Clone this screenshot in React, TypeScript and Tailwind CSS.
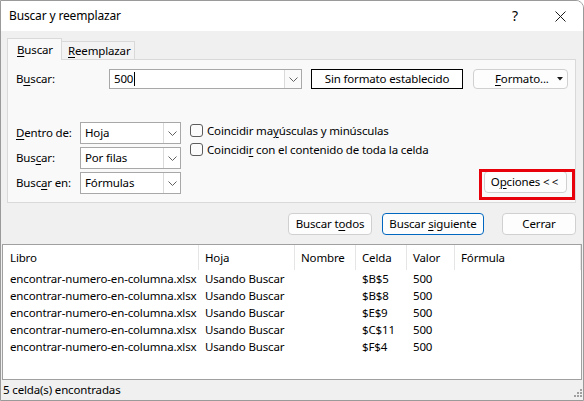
import React from 'react';

const rows = [
  { libro: 'encontrar-numero-en-columna.xlsx', hoja: 'Usando Buscar', celda: '$B$5', valor: '500' },
  { libro: 'encontrar-numero-en-columna.xlsx', hoja: 'Usando Buscar', celda: '$B$8', valor: '500' },
  { libro: 'encontrar-numero-en-columna.xlsx', hoja: 'Usando Buscar', celda: '$E$9', valor: '500' },
  { libro: 'encontrar-numero-en-columna.xlsx', hoja: 'Usando Buscar', celda: '$C$11', valor: '500' },
  { libro: 'encontrar-numero-en-columna.xlsx', hoja: 'Usando Buscar', celda: '$F$4', valor: '500' },
];

const cols = [
  { label: 'Libro', w: 'w-[195px]' },
  { label: 'Hoja', w: 'w-[96px]' },
  { label: 'Nombre', w: 'w-[61px]' },
  { label: 'Celda', w: 'w-[51px]' },
  { label: 'Valor', w: 'w-[48px]' },
  { label: 'Fórmula', w: 'w-[126px]' },
];

// access key letter
function K({ children }: { children: React.ReactNode }) {
  return <span className="underline decoration-1 underline-offset-[2px]">{children}</span>;
}

function Chevron() {
  return (
    <svg width="9" height="5" viewBox="0 0 9 5" fill="none" stroke="#606060" strokeWidth="1">
      <path d="M0.5 0.5l4 4 4-4" />
    </svg>
  );
}

function Select({ value }: { value: string }) {
  return (
    <div className="flex h-[22px] w-[101px] items-center border border-[#a8a8a8] bg-white">
      <span className="flex-1 pl-[4px]">{value}</span>
      <span className="flex h-full w-[17px] items-center justify-center border-l border-[#dadada]">
        <Chevron />
      </span>
    </div>
  );
}

function Check({ children }: { children: React.ReactNode }) {
  return (
    <div className="flex h-[19px] items-center">
      <span className="h-[13px] w-[13px] rounded-[3px] border border-[#5c5c5c] bg-[#fbfbfb]" />
      <span className="ml-[4px]">{children}</span>
    </div>
  );
}

function Btn({ children, w, focus }: { children: React.ReactNode; w: string; focus?: boolean }) {
  return (
    <div
      className={`flex h-[22px] ${w} items-center justify-center rounded-[4px] border bg-[#fdfdfd] ${
        focus ? 'border-[#0067c0]' : 'border-[#d0d0d0]'
      }`}
    >
      <span>{children}</span>
    </div>
  );
}

export default function App() {
  return (
    <div className="flex h-[401px] w-[584px] flex-col overflow-hidden whitespace-nowrap rounded-tr-[8px] border border-[#9a9a9a] bg-[#f0f0f0] font-['Segoe_UI','Noto_Sans',sans-serif] text-[11.5px] leading-none tracking-[-0.15px] text-black">
      {/* title bar */}
      <div className="flex h-[30px] shrink-0 items-center bg-white pl-[8px]">
        <span className="text-[12px]">Buscar y reemplazar</span>
        <span className="ml-auto mr-[37px] text-[14px]">?</span>
        <svg className="mr-[17px]" width="11" height="11" viewBox="0 0 11 11" stroke="#1a1a1a" strokeWidth="1">
          <path d="M0.5 0.5l10 10M10.5 0.5l-10 10" />
        </svg>
      </div>

      <div className="ml-[6px] w-[569px] pt-[7px]">
        {/* tabs */}
        <div className="flex h-[21px] items-end">
          <div className="relative z-10 -mb-px flex h-[22px] w-[55px] items-center border border-b-0 border-[#d9d9d9] bg-[#f9f9f9] pl-[9px]">
            <span><K>B</K>uscar</span>
          </div>
          <div className="flex h-[18px] w-[73px] items-center border border-b-0 border-l-0 border-[#d9d9d9] bg-[#f3f3f3] pl-[6px]">
            <span><K>R</K>eemplazar</span>
          </div>
        </div>

        {/* panel */}
        <div className="relative h-[144px] border border-[#d9d9d9] bg-[#f9f9f9] pl-[8px] pt-[9px]">
          <div className="flex items-center">
            <span className="w-[93px]">B<K>u</K>scar:</span>
            <div className="flex h-[20px] w-[193px] items-center border border-[#a8a8a8] bg-white">
              <span className="flex flex-1 items-center pl-[4px]">
                500<span className="ml-px inline-block h-[14px] w-px bg-black" />
              </span>
              <span className="flex h-full w-[17px] items-center justify-center border-l border-[#dadada] bg-[#fafafa]">
                <Chevron />
              </span>
            </div>
            <div className="ml-[9px] flex h-[20px] w-[152px] items-center justify-center border border-black bg-white">
              Sin formato establecido
            </div>
            <div className="ml-[10px] flex h-[20px] w-[95px] items-center rounded-[4px] border border-[#d0d0d0] bg-[#fdfdfd] pl-[21px]">
              <span><K>F</K>ormato...</span>
              <svg className="ml-auto mr-[4px]" width="6" height="4" viewBox="0 0 6 4" fill="#1a1a1a">
                <path d="M0 0h6L3 3.5z" />
              </svg>
            </div>
          </div>

          <div className="mt-[33px] flex">
            <div className="flex flex-col gap-[3px]">
              <div className="flex items-center">
                <span className="w-[64px]"><K>D</K>entro de:</span>
                <Select value="Hoja" />
              </div>
              <div className="flex items-center">
                <span className="w-[64px]">Bus<K>c</K>ar:</span>
                <Select value="Por filas" />
              </div>
              <div className="flex items-center">
                <span className="w-[64px]">Busc<K>a</K>r en:</span>
                <Select value="Fórmulas" />
              </div>
            </div>

            <div className="ml-[9px] -mt-[1px] flex flex-col">
              <Check>Coincidir ma<K>y</K>úsculas y minúsculas</Check>
              <Check>Coincidi<K>r</K> con el contenido de toda la celda</Check>
            </div>

            <div className="ml-auto mr-[8px] self-end pb-px">
              <Btn w="w-[83px]">
                O<K>p</K>ciones <span className="tracking-[2px]">&lt;&lt;</span>
              </Btn>
            </div>
          </div>

          {/* highlight annotation */}
          <div className="absolute left-[471px] top-[109px] h-[31px] w-[96px] border-[3px] border-[#e8000b]" />
        </div>

        {/* action buttons */}
        <div className="mt-[10px] flex justify-end">
          <Btn w="w-[84px]">Buscar t<K>o</K>dos</Btn>
          <div className="ml-[10px]">
            <Btn w="w-[102px]" focus>Buscar <K>s</K>iguiente</Btn>
          </div>
          <div className="ml-[18px]">
            <Btn w="w-[74px]">Cerrar</Btn>
          </div>
        </div>
      </div>

      {/* results */}
      <div className="mx-px mt-[9px] flex-1 border border-[#a0a0a0] bg-white pl-px">
        <div className="flex h-[25px] items-stretch">
          {cols.map((c) => (
            <div key={c.label} className={`${c.w} flex items-center border-r border-[#e5e5e5] pl-[6px]`}>
              {c.label}
            </div>
          ))}
        </div>
        {rows.map((r, i) => (
          <div key={i} className="flex h-[17px] items-center">
            <div className="w-[195px] pl-[6px]">{r.libro}</div>
            <div className="w-[96px] pl-[6px]">{r.hoja}</div>
            <div className="w-[61px] pl-[6px]" />
            <div className="w-[51px] pl-[6px]">{r.celda}</div>
            <div className="w-[48px] pl-[6px]">{r.valor}</div>
          </div>
        ))}
      </div>

      {/* status bar */}
      <div className="flex h-[20px] shrink-0 items-center pl-[2px]">
        <span>5 celda(s) encontradas</span>
        <svg className="ml-auto mr-px mt-[6px]" width="8" height="8" viewBox="0 0 8 8" fill="#a0a0a0">
          <rect x="6" y="0" width="2" height="2" />
          <rect x="3" y="3" width="2" height="2" />
          <rect x="6" y="3" width="2" height="2" />
          <rect x="0" y="6" width="2" height="2" />
          <rect x="3" y="6" width="2" height="2" />
          <rect x="6" y="6" width="2" height="2" />
        </svg>
      </div>
    </div>
  );
}
